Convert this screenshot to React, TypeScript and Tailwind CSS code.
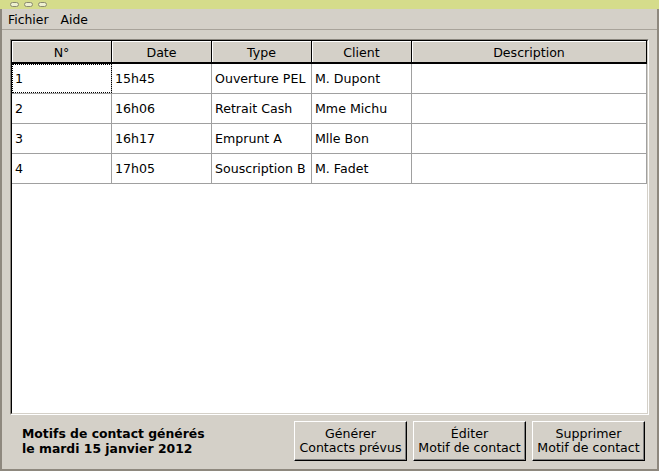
const rows = [
  ["1", "15h45", "Ouverture PEL", "M. Dupont", ""],
  ["2", "16h06", "Retrait Cash", "Mme Michu", ""],
  ["3", "16h17", "Emprunt A", "Mlle Bon", ""],
  ["4", "17h05", "Souscription B", "M. Fadet", ""],
];

const headers = ["N°", "Date", "Type", "Client", "Description"];
const widths = ["w-[100px]", "w-[100px]", "w-[100px]", "w-[100px]", "flex-1"];

function Btn({ top, bottom }: { top: string; bottom: string }) {
  return (
    <button className="h-[40px] w-[113px] bg-[#d4d0c8] border border-t-white border-l-white border-r-black border-b-black shadow-[inset_-1px_-1px_0_#808080] text-[12.6px] leading-[14px] text-black flex flex-col items-center justify-center">
      <span>{top}</span>
      <span>{bottom}</span>
    </button>
  );
}

export default function App() {
  return (
    <div className="w-[659px] h-[471px] flex flex-col bg-[#d4d0c8] text-black overflow-hidden" style={{ fontFamily: '"DejaVu Sans", sans-serif' }}>
      {/* title bar */}
      <div className="h-[9px] bg-[#d5dc8b] flex items-center gap-[5px] pl-[10px] shrink-0">
        <span className="w-[9px] h-[5px] rounded-full border border-[#8a8a70] bg-[#eef0d0]" />
        <span className="w-[9px] h-[5px] rounded-full border border-[#8a8a70] bg-[#eef0d0]" />
        <span className="w-[9px] h-[5px] rounded-full border border-[#8a8a70] bg-[#eef0d0]" />
      </div>

      <div className="flex-1 flex flex-col border-l-2 border-r-2 border-b-2 border-[#8e887e]">
        {/* menu */}
        <div className="h-[21px] flex items-center gap-[12px] pl-[6px] pt-[2px] text-[12.4px] border-b border-[#a8a39a] shrink-0">
          <span>Fichier</span>
          <span>Aide</span>
        </div>

        {/* table */}
        <div className="mt-[9px] mx-[8px] h-[376px] border border-t-[#8a867e] border-l-[#8a867e] border-r-white border-b-white">
          <div className="h-full border border-black border-r-[#d4d0c8] border-b-[#d4d0c8] bg-white flex flex-col">
            <div className="flex h-[23px] bg-[#d4d0c8] border-b-2 border-black shrink-0">
              {headers.map((h, i) => (
                <div key={h} className={`${widths[i]} flex items-center justify-center pt-[3px] text-[12.6px] border-r border-black shadow-[inset_1px_1px_0_white]`}>
                  {h}
                </div>
              ))}
            </div>
            {rows.map((r, ri) => (
              <div key={ri} className="flex h-[30px] border-b border-[#a0a0a0]">
                {r.map((c, ci) => (
                  <div
                    key={ci}
                    className={`${widths[ci]} flex items-center pl-[3px] pt-[1px] text-[12.6px] border-r border-[#a0a0a0] ${ri === 0 && ci === 0 ? "outline outline-1 outline-dotted outline-black -outline-offset-1" : ""}`}
                  >
                    {c}
                  </div>
                ))}
              </div>
            ))}
          </div>
        </div>

        {/* bottom */}
        <div className="flex items-center flex-1 pl-[20px] pr-[12px]">
          <div className="font-bold text-[12.4px] leading-[15px] flex-1 -mt-[2px]">
            <div>Motifs de contact générés</div>
            <div>le mardi 15 janvier 2012</div>
          </div>
          <div className="flex gap-[6px] -mt-[2px]">
            <Btn top="Générer" bottom="Contacts prévus" />
            <Btn top="Éditer" bottom="Motif de contact" />
            <Btn top="Supprimer" bottom="Motif de contact" />
          </div>
        </div>
      </div>
    </div>
  );
}
